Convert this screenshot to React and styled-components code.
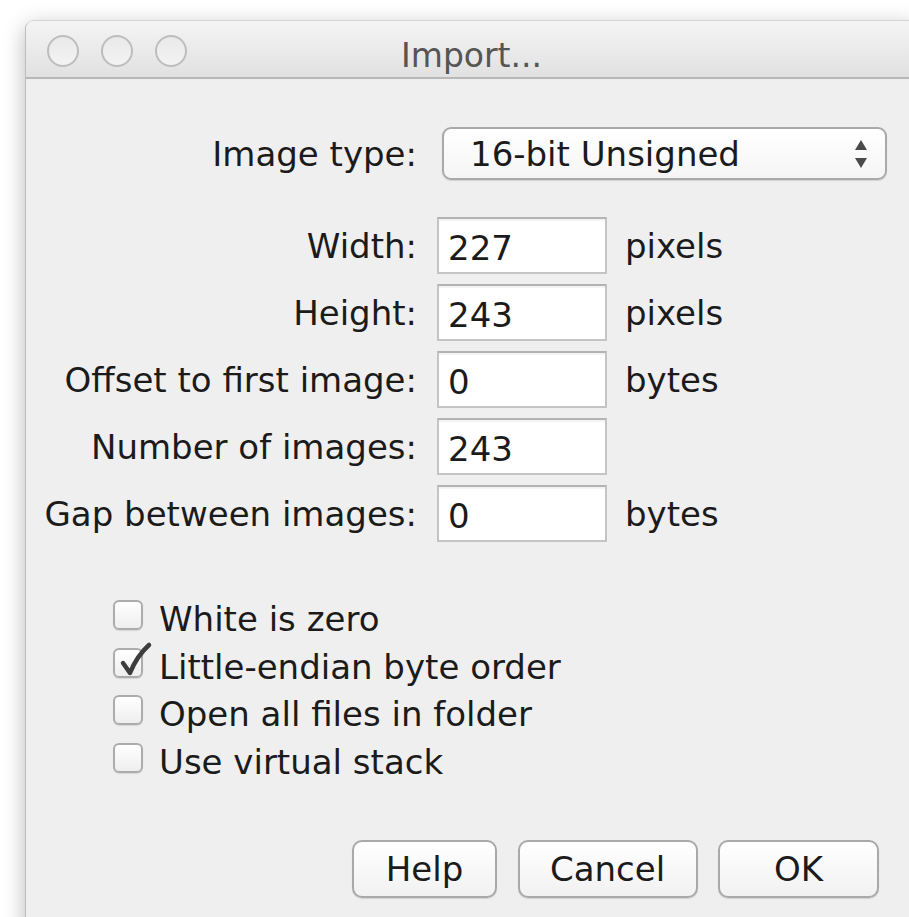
import React from "react";
import styled, {createGlobalStyle} from "styled-components";

const GlobalStyle = createGlobalStyle`
  html, body {
    margin: 0;
    background: #ffffff;
    overflow: hidden;
  }
  body {
    font-family: "DejaVu Sans", "Liberation Sans", sans-serif;
    color: #1b1b1b;
  }
`

const Stage = styled.div`
  padding: 20px 0 0 25px;
  height: 917px;
  box-sizing: border-box;
`

const Window = styled.div`
  width: 892px;
  height: 920px;
  box-sizing: border-box;
  border-left: 1px solid #bdbdbd;
  border-top: 1px solid #d4d4d4;
  border-radius: 9px 9px 0 0;
  background: #efefef;
  box-shadow: 0 6px 22px rgba(0, 0, 0, 0.28);
  overflow: hidden;
`

const TitleBar = styled.div`
  height: 56px;
  display: grid;
  grid-template-columns: 1fr auto 1fr;
  align-items: center;
  background: linear-gradient(#f4f4f4, #e1e1e1);
  border-bottom: 2px solid #b7b7b7;
`

const Lights = styled.div`
  display: flex;
  gap: 22px;
  padding: 3px 0 0 21px;
`

const Light = styled.span`
  width: 28px;
  height: 28px;
  border-radius: 50%;
  border: 2px solid #bdbdbd;
  background: linear-gradient(#e9e9e9, #f3f3f3);
`

const Title = styled.div`
  font-size: 33px;
  color: #555555;
  padding-top: 12px;
`

const Body = styled.div`
  padding-top: 48px;
  font-size: 34px;
`

const Form = styled.div`
  display: grid;
  grid-template-columns: 391px 170px auto;
  column-gap: 20px;
  row-gap: 10px;
  align-items: center;
`

const Label = styled.div`
  text-align: right;
  white-space: nowrap;
  margin-bottom: ${p => p.$spaced ? 27 : 0}px;
`

const Unit = styled.div`
  margin-left: -2px;
`

const Popup = styled.div`
  grid-column: 2 / span 2;
  margin: 0 0 27px 5px;
  width: 445px;
  height: 53px;
  box-sizing: border-box;
  border: 2px solid #a9a9a9;
  border-radius: 9px;
  background: linear-gradient(#ffffff, #f5f5f5);
  box-shadow: 0 1px 1px rgba(0, 0, 0, 0.12);
  display: flex;
  align-items: center;
  justify-content: space-between;
  padding: 0 16px 0 26px;
`

const Field = styled.div`
  height: 57px;
  box-sizing: border-box;
  border: 2px solid #c4c4c4;
  border-top-color: #b3b3b3;
  background: #ffffff;
  box-shadow: inset 0 2px 1px rgba(0, 0, 0, 0.05);
  display: flex;
  align-items: center;
  padding: 4px 0 0 9px;
`

const Options = styled.div`
  margin-top: 58px;
  padding-left: 87px;
  display: flex;
  flex-direction: column;
  gap: 17.7px;
`

const Option = styled.label`
  display: flex;
  align-items: flex-start;
  gap: 16px;
  height: 30px;
`

const OptionText = styled.span`
  line-height: 30px;
  padding-top: 4px;
  white-space: nowrap;
`

const Box = styled.span`
  position: relative;
  flex: none;
  width: 30px;
  height: 30px;
  box-sizing: border-box;
  border: 2px solid #acacac;
  border-radius: 6px;
  background: linear-gradient(#ffffff, #eeeeee);
  box-shadow: 0 1px 1px rgba(0, 0, 0, 0.1);

  svg {
    position: absolute;
    left: -2px;
    top: -9px;
  }
`

const Buttons = styled.div`
  margin-top: 67px;
  display: flex;
  justify-content: flex-end;
  gap: 20.5px;
  padding-right: 38px;
`

const Button = styled.div`
  width: ${p => p.$w}px;
  height: 58px;
  box-sizing: border-box;
  border: 2px solid #a9a9a9;
  border-radius: 10px;
  background: linear-gradient(#ffffff, #f1f1f1);
  box-shadow: 0 1px 1px rgba(0, 0, 0, 0.12);
  display: flex;
  align-items: center;
  justify-content: center;
`

const Stepper = () => (
  <svg width="16" height="30" viewBox="0 0 16 30">
    <path d="M8 1 L14 11 L2 11 Z" fill="#4a4a4a"/>
    <path d="M2 19 L14 19 L8 29 Z" fill="#4a4a4a"/>
  </svg>
)

// tick rises out of the box, like the Aqua checkbox
const Check = () => (
  <svg width="40" height="42" viewBox="0 0 40 42">
    <path d="M10 22 L17 32 C21 22 27 12 36 4" fill="none" stroke="#3d3d3d"
      strokeWidth="4.5" strokeLinecap="round" strokeLinejoin="round"/>
  </svg>
)

const rows = [
  ['Width:', '227', 'pixels'],
  ['Height:', '243', 'pixels'],
  ['Offset to first image:', '0', 'bytes'],
  ['Number of images:', '243', ''],
  ['Gap between images:', '0', 'bytes'],
]

const options = [
  ['White is zero', false],
  ['Little-endian byte order', true],
  ['Open all files in folder', false],
  ['Use virtual stack', false],
]

export default function App() {
  return <Stage>
    <GlobalStyle/>
    <Window>
      <TitleBar>
        <Lights>
          <Light/><Light/><Light/>
        </Lights>
        <Title>Import...</Title>
        <div/>
      </TitleBar>
      <Body>
        <Form>
          <Label $spaced>Image type:</Label>
          <Popup>
            <span>16-bit Unsigned</span>
            <Stepper/>
          </Popup>
          {rows.map(([label, value, unit]) => <React.Fragment key={label}>
            <Label>{label}</Label>
            <Field>{value}</Field>
            <Unit>{unit}</Unit>
          </React.Fragment>)}
        </Form>
        <Options>
          {options.map(([text, checked]) => <Option key={text}>
            <Box>{checked && <Check/>}</Box>
            <OptionText>{text}</OptionText>
          </Option>)}
        </Options>
        <Buttons>
          <Button $w={145}>Help</Button>
          <Button $w={180}>Cancel</Button>
          <Button $w={161}>OK</Button>
        </Buttons>
      </Body>
    </Window>
  </Stage>
}
